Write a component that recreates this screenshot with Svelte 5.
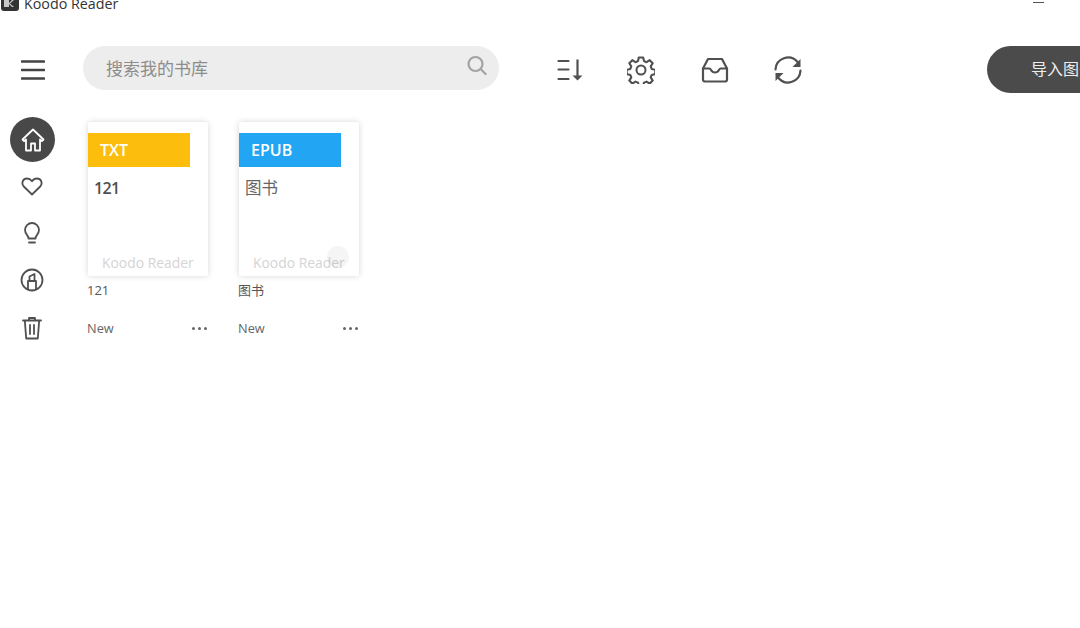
<script>
  const books = [
    { format: "TXT", color: "#fcbd0c", cover: "121", name: "121", bold: true },
    { format: "EPUB", color: "#22a5f2", cover: "图书", name: "图书", check: true },
  ];
</script>

<div class="page">
  <div class="titlebar">
    <svg class="app-logo" width="18" height="18" viewBox="0 0 18 18">
      <rect width="18" height="18" rx="3" fill="#333"/>
      <path d="M3 7h5v3l3-3h2l-4 3.500 4 3.500h-2l-3-3v3H3z" fill="#c8c8c8"/>
    </svg>
    <span class="app-name">Koodo Reader</span>
    <span class="minimize"></span>
  </div>

  <header class="topbar">
    <button class="menu" aria-label="menu">
      <svg width="24" height="24" viewBox="0 0 24 24"><path d="M1 3.500h22M1 12h22M1 20.500h22" stroke="#444" stroke-width="2.600" stroke-linecap="round" fill="none"/></svg>
    </button>
    <div class="search">
      <span class="placeholder">搜索我的书库</span>
      <svg width="22" height="22" viewBox="0 0 22 22" fill="none" stroke="#a3a3a3" stroke-width="2.200" stroke-linecap="round"><circle cx="9.500" cy="9" r="7"/><path d="M14.600 14l5 5"/></svg>
    </div>
    <div class="tools">
      <svg width="28" height="28" viewBox="0 0 28 28" fill="none" stroke="#505050" stroke-width="2.200">
        <path d="M1.500 5h10M1.500 13.500h10M1.500 23h10" stroke-linecap="round"/>
        <path d="M20.500 3.500v17"/>
        <path d="M15.500 19.500h10l-5 5z" fill="#505050" stroke="none"/>
      </svg>
      <svg width="28" height="28" viewBox="0 0 28 28" fill="none" stroke="#505050" stroke-width="2">
        <circle cx="14" cy="14" r="4.500"/>
        <path d="M11.800 1.500h4.400l.8 3.600 2.500 1.100 3.200-2 3 3.100-2 3.100 1 2.500 3.600.9v4.300l-3.600.8-1 2.500 2 3.200-3 3-3.200-2-2.500 1-.8 3.600h-4.400l-.8-3.600-2.500-1-3.200 2-3-3 2-3.200-1-2.500-3.600-.8v-4.300l3.600-.9 1-2.500-2-3.100 3-3.100 3.200 2 2.500-1.100z" stroke-linejoin="round" stroke-width="2.100"/>
      </svg>
      <svg width="28" height="28" viewBox="0 0 28 28" fill="none" stroke="#505050" stroke-width="2.200" stroke-linejoin="round" stroke-linecap="round">
        <path d="M2 12.500L7 3h14l5 9.500V23.500a2 2 0 0 1-2 2H4a2 2 0 0 1-2-2z"/>
        <path d="M2 12.500h6.500c1.500 0 1.500 4 5.500 4s4-4 5.500-4H26"/>
      </svg>
      <svg width="28" height="28" viewBox="0 0 28 28" fill="none" stroke="#505050" stroke-width="2.200" stroke-linecap="round">
        <path d="M1.500 13.500A12.500 12.500 0 0 1 23.500 6"/>
        <path d="M26.500 14.500A12.500 12.500 0 0 1 4.500 22"/>
        <path d="M26.500 3v8h-8z" fill="#505050" stroke="none"/>
        <path d="M1.500 25v-8h8z" fill="#505050" stroke="none"/>
      </svg>
    </div>
    <button class="import">导入图书</button>
  </header>

  <div class="body">
    <nav class="sidebar">
      <div class="nav-item active">
        <svg width="24" height="24" viewBox="0 0 24 24" fill="none" stroke="#fff" stroke-width="1.800" stroke-linejoin="round">
          <path d="M12 1.500L1.500 11.500l1.600 1.600 1.900-1.700V22.500h5v-7h4v7h5V11.400l1.900 1.700 1.600-1.600z"/>
        </svg>
      </div>
      <div class="nav-item">
        <svg width="24" height="24" viewBox="0 0 24 24" fill="none" stroke="#505050" stroke-width="1.800" stroke-linejoin="round">
          <path d="M12 20.500L3.800 12.500C.8 9 3 4.500 7 4.500 9.200 4.500 11 5.800 12 7.200 13 5.800 14.800 4.500 17 4.500 21 4.500 23.200 9 20.200 12.500z"/>
        </svg>
      </div>
      <div class="nav-item">
        <svg width="24" height="24" viewBox="0 0 24 24" fill="none" stroke="#505050" stroke-width="1.800" stroke-linecap="round">
          <path d="M8.500 17.500c0-3-3.500-4.500-3.500-8.500a7 7 0 0 1 14 0c0 4-3.500 5.500-3.500 8.500z" stroke-linejoin="round"/>
          <path d="M9 21.500h6"/>
        </svg>
      </div>
      <div class="nav-item">
        <svg width="24" height="24" viewBox="0 0 24 24" fill="none" stroke="#505050" stroke-width="1.800" stroke-linejoin="round">
          <circle cx="12" cy="12" r="10.500"/>
          <path d="M8 21.500v-8.500h8v8.500M9.500 13V8.500L14.500 6v7" />
        </svg>
      </div>
      <div class="nav-item">
        <svg width="24" height="24" viewBox="0 0 24 24" fill="none" stroke="#505050" stroke-width="1.800" stroke-linecap="round" stroke-linejoin="round">
          <path d="M3 4.500h18M9 4.500V2h6v2.500M4.800 4.500l1.400 18h11.600l1.400-18M10 9v9M14 9v9"/>
        </svg>
      </div>
    </nav>

    <main class="shelf">
      {#each books as book}
        <article class="book">
          <div class="cover">
            <div class="format" style="background: {book.color}">{book.format}</div>
            <div class="cover-title" class:bold={book.bold}>{book.cover}</div>
            <div class="brand">Koodo Reader</div>
            {#if book.check}
              <span class="check"></span>
            {/if}
          </div>
          <div class="name">{book.name}</div>
          <div class="meta">
            <span>New</span>
            <span class="dots"><i></i><i></i><i></i></span>
          </div>
        </article>
      {/each}
    </main>
  </div>
</div>

<style>
  :global(body) {
    margin: 0;
    background: #fff;
    overflow: hidden;
  }
  .page {
    width: 1080px;
    height: 628px;
    overflow: hidden;
    font-family: "Open Sans", "Noto Sans CJK SC", sans-serif;
    color: #505050;
  }
  .titlebar {
    height: 11px;
    display: flex;
    align-items: flex-end;
    overflow: hidden;
    padding-left: 1px;
  }
  .app-logo {
    flex: none;
  }
  .app-name {
    margin-left: 5px;
    font-size: 14.300px;
    line-height: 18px;
    margin-bottom: -2px;
    color: #333;
  }
  .minimize {
    margin-left: auto;
    margin-right: 36px;
    margin-bottom: 8px;
    width: 11px;
    height: 1px;
    background: #555;
  }
  .topbar {
    display: flex;
    align-items: center;
    height: 47px;
    margin-top: 35px;
    padding-left: 21px;
  }
  .menu {
    width: 24px;
    height: 24px;
    padding: 0;
    border: 0;
    background: none;
    display: flex;
  }
  .search {
    margin-left: 38px;
    width: 416px;
    height: 44px;
    margin-bottom: 3px;
    flex: none;
    box-sizing: border-box;
    border-radius: 22px;
    background: #ededed;
    display: flex;
    align-items: center;
    justify-content: space-between;
    padding: 0 11px 2px 23px;
  }
  .placeholder {
    font-size: 17px;
    color: #8c8c8c;
  }
  .search svg {
    margin-top: -2px;
  }
  .tools {
    margin-left: 58px;
    display: flex;
    gap: 45.500px;
    flex: none;
  }
  .tools svg:nth-child(2) {
    margin-left: -3.500px;
  }
  .import {
    margin-left: auto;
    width: 140px;
    height: 47px;
    margin-right: -47px;
    flex: none;
    border: 0;
    border-radius: 24px 0 0 24px;
    background: #4b4b4b;
    color: #eee;
    font: 16px "Noto Sans CJK SC", sans-serif;
    text-align: left;
    padding: 0 0 3px 44px;
  }
  .body {
    display: flex;
    margin-top: 24px;
  }
  .sidebar {
    width: 88px;
    flex: none;
    display: flex;
    flex-direction: column;
    align-items: flex-start;
    padding: 0 0 0 10px;
    box-sizing: border-box;
  }
  .nav-item {
    width: 44px;
    height: 47.300px;
    display: flex;
    align-items: center;
    justify-content: center;
  }
  .nav-item.active {
    width: 45px;
    height: 45px;
    border-radius: 50%;
    background: #484848;
  }
  .shelf {
    display: flex;
    gap: 31px;
    align-items: flex-start;
    padding-top: 5px;
  }
  .book {
    width: 120px;
  }
  .cover {
    position: relative;
    height: 154px;
    width: 120px;
    box-sizing: border-box;
    padding-top: 11px;
    border-radius: 2px;
    background: #fff;
    box-shadow: 0 0 6px rgba(0, 0, 0, 0.16);
  }
  .format {
    width: 102px;
    height: 34px;
    padding-left: 12px;
    box-sizing: border-box;
    color: #fff;
    font-size: 16px;
    font-weight: 600;
    line-height: 34px;
  }
  .cover-title {
    margin: 10px 0 0 6px;
    font-size: 16.500px;
    line-height: 22px;
    color: #666;
  }
  .cover-title.bold {
    font-size: 16px;
    letter-spacing: -0.700px;
    font-weight: 600;
    color: #505050;
  }
  .brand {
    position: absolute;
    left: 14px;
    bottom: 4px;
    font-size: 13.900px;
    color: #d4d4d4;
    white-space: nowrap;
  }
  .check {
    position: absolute;
    right: 10px;
    bottom: 8px;
    width: 22px;
    height: 22px;
    border-radius: 50%;
    background: rgba(0, 0, 0, 0.04);
  }
  .name {
    margin: 6px 0 0 -1px;
    font-size: 13px;
    line-height: 16px;
    color: #555;
  }
  .meta {
    margin: 21px 0 0 -1px;
    display: flex;
    justify-content: space-between;
    align-items: center;
    font-size: 12.800px;
    line-height: 18px;
    color: #666;
  }
  .dots {
    display: flex;
    gap: 3px;
    margin: 1px 1px 0 0;
  }
  .dots i {
    width: 3px;
    height: 3px;
    border-radius: 50%;
    background: #666;
  }
</style>
